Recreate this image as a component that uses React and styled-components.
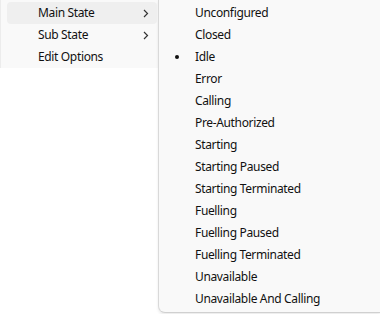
import React from 'react';
import styled, { createGlobalStyle } from 'styled-components';

const GlobalStyle = createGlobalStyle`
    html, body {
        margin: 0;
        padding: 0;
        background: #ffffff;
        overflow: hidden;
    }
    body {
        font-family: 'Noto Sans', 'Open Sans', sans-serif;
        font-size: 12px;
        letter-spacing: -0.35px;
        color: #111111;
    }
`;

const Stage = styled.div`
    display: flex;
    align-items: flex-start;
    width: 380px;
    height: 314px;
`;

const MainMenu = styled.ul`
    list-style: none;
    margin: 0;
    padding: 2px 1px 0 6px;
    width: 150px;
    height: 66px;
    background: #f9f9f9;
    border-left: 1px solid #ececec;
    box-sizing: content-box;
`;

const SubMenu = styled.ul`
    list-style: none;
    margin: 0;
    padding: 2px 0 2px;
    flex: 1;
    height: 308px;
    background: #f9f9f9;
    border-left: 1px solid #d9d9d9;
    border-bottom: 1px solid #d0d0d0;
    border-bottom-left-radius: 7px;
    box-shadow: 0 2px 3px rgba(0, 0, 0, 0.08);
`;

const Item = styled.li`
    position: relative;
    display: flex;
    align-items: center;
    height: 22px;
    padding-left: ${(p) => p.$indent}px;
    border-radius: 4px;
    background: ${(p) => (p.$hover ? '#efefef' : 'transparent')};
    white-space: nowrap;
    line-height: 22px;
`;

const Chevron = styled.svg`
    position: absolute;
    right: 8px;
    top: 7px;
`;

const Bullet = styled.span`
    position: absolute;
    left: 16px;
    top: 9px;
    width: 4px;
    height: 4px;
    border-radius: 50%;
    background: #111111;
`;

const mainItems = [
    { label: 'Main State', sub: true, hover: true },
    { label: 'Sub State', sub: true },
    { label: 'Edit Options' },
];

const states = [
    'Unconfigured',
    'Closed',
    'Idle',
    'Error',
    'Calling',
    'Pre-Authorized',
    'Starting',
    'Starting Paused',
    'Starting Terminated',
    'Fuelling',
    'Fuelling Paused',
    'Fuelling Terminated',
    'Unavailable',
    'Unavailable And Calling',
];

const App = () => (
    <>
        <GlobalStyle />
        <Stage>
            <MainMenu>
                {mainItems.map((item) => (
                    <Item key={item.label} $indent={31} $hover={item.hover}>
                        {item.label}
                        {item.sub && (
                            <Chevron width="6" height="9" viewBox="0 0 6 9">
                                <path
                                    d="M1 1l3.5 3.5L1 8"
                                    fill="none"
                                    stroke="#333"
                                    strokeWidth="1.2"
                                />
                            </Chevron>
                        )}
                    </Item>
                ))}
            </MainMenu>
            <SubMenu>
                {states.map((s) => (
                    <Item key={s} $indent={36}>
                        {s === 'Idle' && <Bullet />}
                        {s}
                    </Item>
                ))}
            </SubMenu>
        </Stage>
    </>
);

export default App;
